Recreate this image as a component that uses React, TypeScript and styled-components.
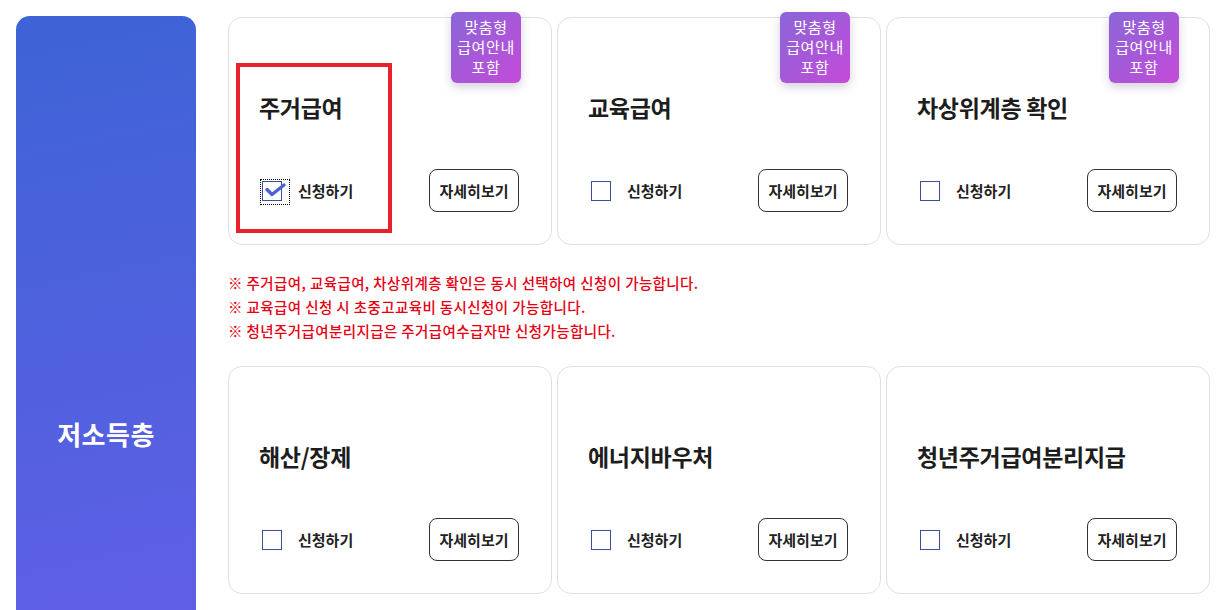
import React from "react";
import styled, { createGlobalStyle } from "styled-components";

const Global = createGlobalStyle`
  html, body { margin: 0; padding: 0; overflow: hidden; background: #fff; }
  body { font-family: "Noto Sans CJK KR", "Noto Sans", sans-serif; color: #222; }
  * { box-sizing: border-box; }
`;

const Page = styled.div`
  display: flex;
  align-items: flex-start;
  gap: 32px;
  padding: 17px 0 0 16px;
  width: 1226px;
`;

const Side = styled.div`
  width: 180px;
  height: 834px;
  flex: none;
  margin-top: -1px;
  border-radius: 14px;
  background: linear-gradient(168deg, #3d63d6 0%, #5e5fe4 70%, #6d5be8 100%);
  display: flex;
  align-items: center;
  justify-content: center;
  color: #fff;
  font-size: 26px;
  font-weight: 700;
  letter-spacing: 0.5px;
`;

const Content = styled.div`
  width: 982px;
  display: flex;
  flex-direction: column;
`;

const Row = styled.div`
  display: grid;
  grid-template-columns: repeat(3, 324px);
  gap: 5px;
`;

const Card = styled.div`
  position: relative;
  height: 228px;
  border: 1px solid #e0e0e0;
  border-radius: 14px;
  background: #fff;
  padding: 74px 32px 32px 30px;
  display: flex;
  flex-direction: column;
`;

const Title = styled.h3`
  margin: 0;
  font-size: 23px;
  line-height: 30px;
  font-weight: 700;
  letter-spacing: -0.3px;
  color: #1d1d1d;
`;

const Actions = styled.div`
  margin-top: auto;
  display: flex;
  align-items: center;
  justify-content: space-between;
`;

const Check = styled.label`
  display: flex;
  align-items: center;
  gap: 16px;
  padding-left: 3px;
  font-size: 15px;
  font-weight: 700;
  letter-spacing: 0;
  color: #222;
`;

const Box = styled.span`
  width: 20px;
  height: 20px;
  border: 1px solid #3b4f9f;
  background: #fff;
  display: block;
`;

const CheckedWrap = styled.span`
  position: relative;
  width: 20px;
  height: 20px;
  display: block;
  &::after {
    content: "";
    position: absolute;
    left: -2px;
    top: -2px;
    width: 28px;
    height: 24px;
    border: 1px dotted #000;
  }
`;

const CheckIcon = styled.svg`
  position: absolute;
  left: 0;
  top: 0;
  overflow: visible;
`;

const DetailButton = styled.button`
  width: 90px;
  height: 43px;
  border: 1px solid #333;
  border-radius: 8px;
  background: #fff;
  font-family: inherit;
  font-size: 15px;
  font-weight: 700;
  letter-spacing: 0;
  color: #222;
  padding: 0;
`;

const Badge = styled.div`
  position: absolute;
  top: -6px;
  right: 30px;
  width: 70px;
  height: 71px;
  border-radius: 6px;
  background: linear-gradient(135deg, #8a66d8 0%, #a957d8 55%, #c54bd9 100%);
  box-shadow: 0 4px 10px rgba(60, 40, 90, 0.22);
  color: #fff;
  font-size: 15px;
  line-height: 20px;
  text-align: center;
  padding-top: 5px;
  letter-spacing: 0.6px;
`;

const Highlight = styled.div`
  position: absolute;
  left: 7px;
  top: 45px;
  width: 156px;
  height: 170px;
  border: 4px solid #e8202a;
  pointer-events: none;
`;

const Notes = styled.ul`
  list-style: none;
  margin: 26px 0 23px;
  padding: 0;
  color: #e60012;
  font-size: 14.5px;
  font-weight: 500;
  line-height: 24px;
  letter-spacing: 0.4px;
`;

type Item = { title: string; badge?: boolean; checked?: boolean; highlight?: boolean };

const row1: Item[] = [
  { title: "주거급여", badge: true, checked: true, highlight: true },
  { title: "교육급여", badge: true },
  { title: "차상위계층 확인", badge: true },
];
const row2: Item[] = [
  { title: "해산/장제" },
  { title: "에너지바우처" },
  { title: "청년주거급여분리지급" },
];

function Benefit({ item }: { item: Item }) {
  return (
    <Card>
      {item.badge && (
        <Badge>
          맞춤형
          <br />
          급여안내
          <br />
          포함
        </Badge>
      )}
      {item.highlight && <Highlight />}
      <Title>{item.title}</Title>
      <Actions>
        <Check>
          {item.checked ? (
            <CheckedWrap>
              <Box />
              <CheckIcon width="20" height="20" viewBox="0 0 20 20">
                <path
                  d="M5 8.5 L10 13.5 L22 4"
                  fill="none"
                  stroke="#4a63d9"
                  strokeWidth="3.4"
                  strokeLinecap="round"
                  strokeLinejoin="round"
                />
              </CheckIcon>
            </CheckedWrap>
          ) : (
            <Box />
          )}
          신청하기
        </Check>
        <DetailButton>자세히보기</DetailButton>
      </Actions>
    </Card>
  );
}

export default function App() {
  return (
    <>
      <Global />
      <Page>
        <Side>저소득층</Side>
        <Content>
          <Row>
            {row1.map((it) => (
              <Benefit key={it.title} item={it} />
            ))}
          </Row>
          <Notes>
            <li>※ 주거급여, 교육급여, 차상위계층 확인은 동시 선택하여 신청이 가능합니다.</li>
            <li>※ 교육급여 신청 시 초중고교육비 동시신청이 가능합니다.</li>
            <li>※ 청년주거급여분리지급은 주거급여수급자만 신청가능합니다.</li>
          </Notes>
          <Row>
            {row2.map((it) => (
              <Benefit key={it.title} item={it} />
            ))}
          </Row>
        </Content>
      </Page>
    </>
  );
}
